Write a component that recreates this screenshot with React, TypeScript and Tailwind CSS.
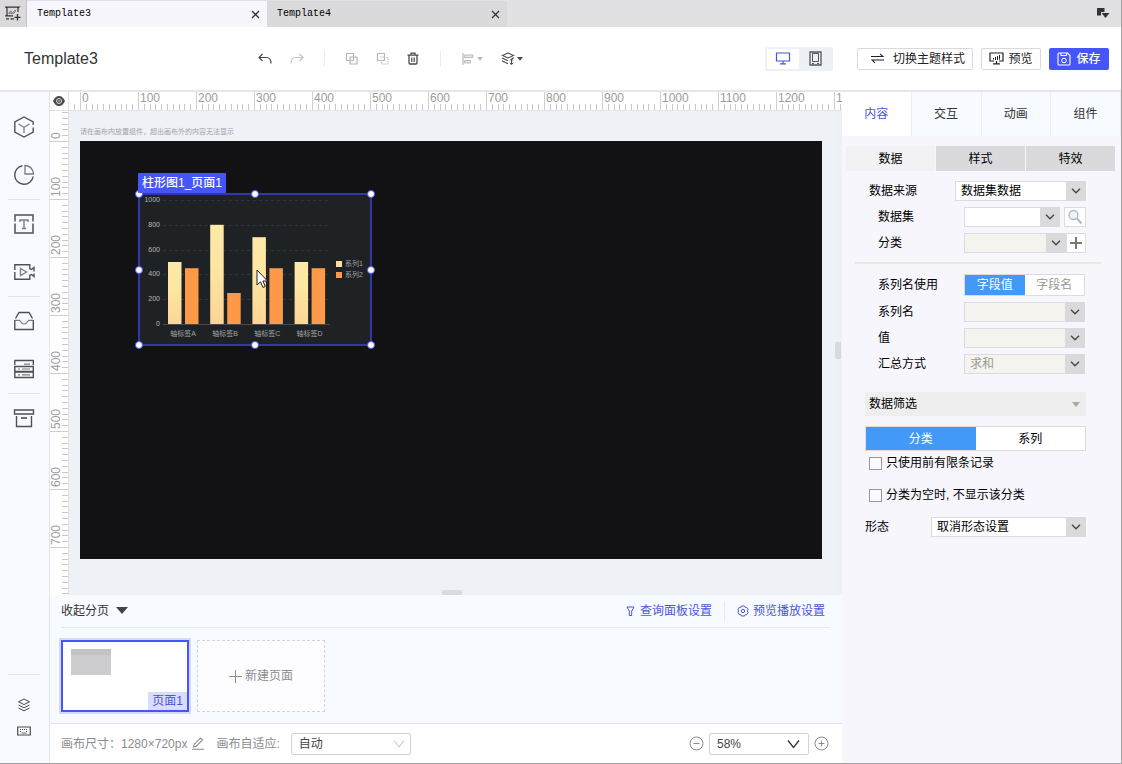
import type { ReactNode } from "react";

const SCALE = 58;

function Svg({ w, h, className = "", children }: { w: number; h: number; className?: string; children: ReactNode }) {
  return (
    <svg
      width={w}
      height={h}
      viewBox={`0 0 ${w} ${h}`}
      fill="none"
      stroke="currentColor"
      aria-hidden="true"
      className={`shrink-0 ${className}`}
    >
      {children}
    </svg>
  );
}

/* ---------- icons ---------- */

const CloseIcon = () => (
  <Svg w={9} h={9}>
    <path d="M1 1l7 7M8 1l-7 7" strokeWidth="1.3" />
  </Svg>
);

const NewBoardIcon = () => (
  <Svg w={16} h={15}>
    <path d="M2 4.500V2L1 1.200h13L13 2v4M2 4.500V9L1 9.800h7" strokeWidth="1.2" />
    <path d="M1 12.800h3M5.500 12.800H9" strokeWidth="1.200" />
    <path d="M3.500 7.500L5.500 5l2 1.500L10.500 4v1.500l-2 2h-5z" strokeWidth="1" stroke="#8a888c" fill="#a5a3a8" />
    <path d="M12.500 8v6.500M9.500 11.300h6" strokeWidth="1.300" />
  </Svg>
);

const WindowMenuIcon = () => (
  <Svg w={13} h={11}>
    <path d="M0 0h7.500v4H4v3.500H0z" fill="currentColor" stroke="none" />
    <path d="M4.500 5h8l-4 5z" fill="currentColor" stroke="none" />
  </Svg>
);

const UndoIcon = () => (
  <Svg w={14} h={12}>
    <path d="M4.500 1L1 4.500 4.500 8M1 4.500h7.500c3 0 4.500 2 4.500 6" strokeWidth="1.2" />
  </Svg>
);

const RedoIcon = () => (
  <Svg w={14} h={12}>
    <path d="M9.500 1L13 4.500 9.500 8M13 4.500H5.500C2.500 4.500 1 6.500 1 10.500" strokeWidth="1.1" />
  </Svg>
);

const GroupIcon = () => (
  <Svg w={13} h={13}>
    <path d="M1.500 1.500h7v7h-7zM5 5h7v7H5z" strokeWidth="1.200" />
  </Svg>
);

const UngroupIcon = () => (
  <Svg w={13} h={13}>
    <path d="M1.500 1.500h7v7h-7z" strokeWidth="1.200" />
    <path d="M5.500 10v2H12V5.500h-2M4 5h4" strokeDasharray="1.500 1" />
  </Svg>
);

const TrashIcon = () => (
  <Svg w={12} h={13}>
    <path d="M.5 3.200h11M4 3V1.200h4V3M2 3.500V11c0 .6.4 1 1 1h6c.6 0 1-.4 1-1V3.500" strokeWidth="1.300" />
    <path d="M4.500 5.500v4.500M7.500 5.500v4.500M6 5.500v4.500" strokeWidth="0.8" />
  </Svg>
);

const AlignIcon = () => (
  <Svg w={12} h={12}>
    <path d="M1 0v12" strokeWidth="1.300" />
    <path d="M2.500 2h8.500v2.500H2.500zM2.500 7.500h6v2.500h-6z" fill="#e6e6e8" />
  </Svg>
);

const LayerMoveIcon = () => (
  <Svg w={14} h={13}>
    <path d="M7 1l5.500 2.500L7 6 1.500 3.500z" strokeWidth="1.100" />
    <path d="M1 6l6 2.800M1 8.800l6 3M13 5.800l-2.200 1" strokeWidth="1.200" />
    <path d="M10.500 7.200v5M8.800 8.500l1.700-1.500 1.700 1.500M8.800 11l1.700 1.500 1.700-1.500" />
  </Svg>
);

const Caret = ({ className = "" }: { className?: string }) => (
  <svg width="6" height="4" viewBox="0 0 6 4" className={className} aria-hidden="true">
    <path d="M0 0h6L3 3.800z" fill="currentColor" />
  </svg>
);

const MonitorIcon = () => (
  <Svg w={16} h={13}>
    <path d="M1.500 1h13v8h-13zM8 9v2.500M5 11.800h6" strokeWidth="1.200" />
  </Svg>
);

const PhoneIcon = () => (
  <Svg w={13} h={15}>
    <path d="M1 1h11v13H1z" strokeWidth="1.300" />
    <path d="M3.500 2.500h6v8h-6zM3 12.500h2M8 12.500h2" />
  </Svg>
);

const SwapIcon = () => (
  <Svg w={13} h={11}>
    <path d="M0 3.500h12L9 .8M13 7H1l3 2.800" strokeWidth="1.100" />
  </Svg>
);

const PreviewIcon = () => (
  <Svg w={15} h={13}>
    <path d="M5 9H1V1h13v8h-4M7.500 9v2.500M4 11.800h7" strokeWidth="1.200" />
    <path d="M4.500 7.500V6M6.500 8V5M8.500 8V4M10.500 7.500V3" />
  </Svg>
);

const SaveIcon = () => (
  <Svg w={14} h={14}>
    <path d="M1 2c0-.6.400-1 1-1h8.500L13 3.500V12c0 .6-.4 1-1 1H2c-.6 0-1-.4-1-1zM4 1v2.500h5.500V1" strokeWidth="1.100" />
    <circle cx="7" cy="8.500" r="2.300" />
  </Svg>
);

const CubeIcon = () => (
  <Svg w={22} h={22}>
    <path d="M20.200 9V6L11 1 1.800 6v10l9.200 5 9.200-5v-4.500" strokeWidth="1.400" />
    <path d="M5.500 8L11 11.200 16.500 8M11 11.200V17" stroke="#7c7c7e" strokeWidth="1.300" />
  </Svg>
);

const PieIcon = () => (
  <Svg w={22} h={22}>
    <path d="M9.500 1.800A9.300 9.300 0 1 0 20.200 12.500" strokeWidth="1.400" />
    <path d="M12 1.500c4.800.4 8 3.700 8.500 8.500H12z" stroke="#7c7c7e" strokeWidth="1.300" />
  </Svg>
);

const TextIcon = () => (
  <Svg w={22} h={20}>
    <path d="M2 7.500V1h18v6.500M2 9.500V19h18V9.500" strokeWidth="1.500" />
    <path d="M7 8V6h8v2M11 6v8.500M9 14.500h4" stroke="#7c7c7e" strokeWidth="1.400" />
  </Svg>
);

const VideoIcon = () => (
  <Svg w={22} h={18}>
    <path d="M1.800 7V1.800h15v4l1.700.7 2.500-2v4M1.800 9v7.200h15v-4l1.700-.7 2.500 2V10.500" strokeWidth="1.400" />
    <path d="M7.500 5.500l6 3.500-6 3.500z" stroke="#7c7c7e" strokeWidth="1.300" />
  </Svg>
);

const TrayIcon = () => (
  <Svg w={22} h={20}>
    <path d="M2.500 7.500L6 1.500h10l3.500 6M1.800 9v9.500h18.500V9" strokeWidth="1.400" />
    <path d="M2 9.300h4.500c.8 0 1.200 3.700 4.600 3.700s3.800-3.700 4.600-3.700H20" stroke="#7c7c7e" strokeWidth="1.200" />
  </Svg>
);

const ServerIcon = () => (
  <Svg w={22} h={20}>
    <path d="M1.800 6V1.500h18.500V6M1.800 7.500h18.500v5H1.800zM1.800 13h18.500v5.500H1.800z" strokeWidth="1.400" />
    <path d="M11 5.200h6M5 10h2M9 10h8M5 15.800h2M9 15.800h8" stroke="#7c7c7e" strokeWidth="1.200" />
  </Svg>
);

const ArchiveIcon = () => (
  <Svg w={22} h={20}>
    <path d="M1.500 2h19v4h-19zM3.500 8v10.500h15V8" strokeWidth="1.400" />
    <path d="M8 10h6" strokeWidth="1.600" />
  </Svg>
);

const LayersIcon = () => (
  <Svg w={14} h={14}>
    <path d="M7 1l5.500 2.800L7 6.600 1.500 3.800zM1.500 7L7 9.800 12.500 7M1.500 10L7 12.800 12.500 10" />
  </Svg>
);

const KeyboardIcon = () => (
  <Svg w={14} h={10}>
    <path d="M.7 1h12.600v8H.7z" strokeWidth="1.200" />
    <path d="M3 3.500h8M3 5.500h2M9 5.500h2" strokeDasharray="1 1" />
    <path d="M4.500 7h5" strokeWidth="0.800" />
  </Svg>
);

const FilterIcon = () => (
  <Svg w={9} h={11}>
    <path d="M1 1h7L5.700 5v4.500H3.300V5z" />
  </Svg>
);

const GearIcon = () => (
  <Svg w={12} h={12}>
    <path d="M4.500 1h3l.7 1.400 1.600.1 1.300 2.300L10.300 6l.8 1.300-1.300 2.300-1.600.1-.7 1.300h-3l-.7-1.300-1.600-.1L.9 7.300 1.700 6 .9 4.800l1.300-2.300 1.600-.1z" />
    <circle cx="6" cy="6" r="1.700" />
  </Svg>
);

const PencilIcon = () => (
  <Svg w={14} h={13}>
    <path d="M2.500 10l.8-2.800L9.500 1l2 2-6.200 6.200zM1 12.300h12" strokeWidth="1.100" />
  </Svg>
);

const EyeIcon = () => (
  <svg width="12" height="10" viewBox="0 0 12 10" aria-hidden="true">
    <path d="M0 5c1.300-3 3.300-5 6-5s4.700 2 6 5c-1.300 3-3.300 5-6 5S1.300 8 0 5z" fill="#4c4c4c" />
    <circle cx="6" cy="5" r="2.500" fill="none" stroke="#d8d8d8" />
    <circle cx="6" cy="5" r="0.800" fill="#d8d8d8" />
  </svg>
);

/* ---------- rulers ---------- */

function TopRuler() {
  const origin = 11;
  return (
    <svg className="block h-[18px] w-full" aria-hidden="true">
      {Array.from({ length: 140 }, (_, n) => n - 1).map((n) => {
        const x = Math.round(origin + (n * SCALE) / 10);
        const major = n % 10 === 0;
        return <rect key={n} x={x} y={major ? 0 : 12} width="1" height={major ? 18 : 6} fill={major ? "#cfcfd2" : "#c9c9cc"} />;
      })}
      {Array.from({ length: 14 }, (_, n) => (
        <text key={n} x={origin + n * SCALE + 2} y="10" className="fill-[#9b9b9b] text-[12px]">
          {n * 100}
        </text>
      ))}
    </svg>
  );
}

function SideRuler() {
  const origin = 30;
  return (
    <svg className="block w-[18px] shrink-0 self-stretch" aria-hidden="true">
      {Array.from({ length: 85 }, (_, n) => n - 5).map((n) => {
        const y = Math.round(origin + (n * SCALE) / 10);
        const major = n % 10 === 0;
        return <rect key={n} x={major ? 0 : 12} y={y} width={major ? 18 : 6} height="1" fill={major ? "#cfcfd2" : "#c9c9cc"} />;
      })}
      {Array.from({ length: 8 }, (_, n) => (
        <text
          key={n}
          transform={`translate(10 ${origin + n * SCALE - 2}) rotate(-90)`}
          className="fill-[#9b9b9b] text-[12px]"
        >
          {n * 100}
        </text>
      ))}
    </svg>
  );
}

/* ---------- chart ---------- */

const rows = [
  { name: "轴标签A", a: 500, b: 450 },
  { name: "轴标签B", a: 800, b: 250 },
  { name: "轴标签C", a: 700, b: 450 },
  { name: "轴标签D", a: 500, b: 450 },
];

function BarChart() {
  const base = 130;
  const unit = 124 / 1000;
  return (
    <svg viewBox="1 0 232 151" className="block h-full w-full" role="img" aria-label="柱形图1">
      <defs>
        <linearGradient id="cream" x1="0" y1="0" x2="0" y2="1">
          <stop offset="0" stopColor="#fee9a6" />
          <stop offset="0.4" stopColor="#fee6a3" />
          <stop offset="1" stopColor="#fdd596" />
        </linearGradient>
      </defs>
      {[0, 200, 400, 600, 800, 1000].map((v) => {
        const y = Math.round(base - v * unit);
        return (
          <g key={v}>
            <path
              d={`M25 ${y + 0.5}H192`}
              stroke={v ? "#343536" : "#4a4a4c"}
              strokeDasharray={v ? "3 3" : undefined}
            />
            <text x="22" y={y + 2} textAnchor="end" className="fill-[#b9b9ba] text-[7px]">
              {v}
            </text>
          </g>
        );
      })}
      {rows.map((r, i) => {
        const x = 30 + i * 42.2;
        return (
          <g key={r.name}>
            <rect x={x} y={base - r.a * unit} width="13.5" height={r.a * unit} fill="url(#cream)" />
            <rect x={x + 17} y={base - r.b * unit} width="13.5" height={r.b * unit} fill="#fd9a48" />
            <text x={x + 15} y="142" textAnchor="middle" className="fill-[#a2a2a4] text-[7px]">
              {r.name}
            </text>
          </g>
        );
      })}
      <rect x="198" y="67" width="6" height="6" fill="#fddf9b" />
      <text x="207" y="72" className="fill-[#a2a2a4] text-[7px]">系列1</text>
      <rect x="198" y="78" width="6" height="6" fill="#fd9a48" />
      <text x="207" y="83" className="fill-[#a2a2a4] text-[7px]">系列2</text>
    </svg>
  );
}

const handles = [
  "left-0 top-0",
  "left-1/2 top-0",
  "left-full top-0",
  "left-0 top-1/2",
  "left-full top-1/2",
  "left-0 top-full",
  "left-1/2 top-full",
  "left-full top-full",
];

/* ---------- form parts ---------- */

function FormSelect({ id, value = "", muted, className = "" }: { id: string; value?: string; muted?: boolean; className?: string }) {
  return (
    <div className={`relative h-5 ${className}`}>
      <select
        id={id}
        disabled={muted}
        className={`h-full w-full appearance-none border border-[#dcdcde] pl-[5px] text-[12px] leading-[18px] opacity-100 outline-none ${
          muted ? "bg-[#f4f3ee] text-[#9a9a9a]" : "bg-white text-black"
        }`}
      >
        <option>{value}</option>
      </select>
      <span className="pointer-events-none absolute inset-y-0 right-0 flex w-5 items-center justify-center bg-[#dadadc] text-[#444]">
        <Svg w={10} h={6}>
          <path d="M1 .8l4 4 4-4" strokeWidth="1.300" />
        </Svg>
      </span>
    </div>
  );
}

function Field({ label, id, children }: { label: string; id: string; children: ReactNode }) {
  return (
    <div className="flex items-center justify-between pl-[9px]">
      <label htmlFor={id}>{label}</label>
      {children}
    </div>
  );
}

const Rule = () => <hr className="w-8 border-[#e3e5ea]" />;

function ToolRow({ label, children }: { label: string; children: ReactNode }) {
  return (
    <button type="button" aria-label={label} className="flex h-12 w-full items-center justify-center text-[#505052]">
      {children}
    </button>
  );
}

/* ---------- page ---------- */

function TabBar() {
  return (
    <div className="flex h-[27px] items-stretch bg-[#e1e0e3] text-[#333]">
      <button type="button" aria-label="新建模板" className="flex w-[27px] items-center justify-center border-r border-[#c4c3c7] bg-[#dcd9dd]">
        <NewBoardIcon />
      </button>
      {["Template3", "Template4"].map((name, i) => (
        <div
          key={name}
          className={`mt-px flex w-[240px] items-center justify-between pl-[10px] pr-[7px] ${i === 0 ? "bg-[#f7f6fc]" : "bg-[#dadadc]"}`}
        >
          <span className="font-['Liberation_Mono',monospace] text-[10px] leading-[14px] text-black">{name}</span>
          <button type="button" aria-label={`关闭 ${name}`}>
            <CloseIcon />
          </button>
        </div>
      ))}
      <button type="button" aria-label="窗口菜单" className="ml-auto mr-[11px] text-[#333]">
        <WindowMenuIcon />
      </button>
    </div>
  );
}

function Header() {
  return (
    <header className="flex h-[65px] items-center border-b-2 border-[#e6e6e8] bg-white pr-3">
      <h1 className="w-[250px] pl-6 text-[16px] leading-[20px] text-[#333]">Template3</h1>
      <div className="flex items-center text-[#4a4a4a]">
        <button type="button" aria-label="撤销" className="ml-2 mr-[9px]"><UndoIcon /></button>
        <button type="button" aria-label="重做" className="ml-[9px] mr-5 text-[#c4c4c6]"><RedoIcon /></button>
        <span className="h-4 w-px bg-[#ececee]" />
        <button type="button" aria-label="组合" className="ml-5 mr-[9px] text-[#b6b6b8]"><GroupIcon /></button>
        <button type="button" aria-label="取消组合" className="ml-[9px] mr-[9px] text-[#b6b6b8]"><UngroupIcon /></button>
        <button type="button" aria-label="删除" className="ml-[9px] mr-[21px]"><TrashIcon /></button>
        <span className="h-4 w-px bg-[#ececee]" />
        <button type="button" aria-label="对齐" className="ml-[21px] mr-[9px] flex items-center gap-[3px] text-[#bcbcbe]">
          <AlignIcon />
          <Caret />
        </button>
        <button type="button" aria-label="层级" className="ml-[9px] flex items-center gap-[2px]">
          <LayerMoveIcon />
          <Caret />
        </button>
      </div>
      <div className="ml-auto flex items-center gap-2 text-[12px] leading-[16px] text-[#222]">
        <div className="mr-4 flex h-6 rounded-[2px] bg-[#edf0f4] p-[2px]">
          <button type="button" aria-label="桌面" className="flex w-8 items-center justify-center bg-white text-[#4756e0]"><MonitorIcon /></button>
          <button type="button" aria-label="手机" className="flex w-8 items-center justify-center text-[#555]"><PhoneIcon /></button>
        </div>
        <button type="button" className="flex h-[22px] w-[116px] items-center justify-center gap-[9px] rounded-[2px] border border-[#d9d9db] pl-[6px]">
          <SwapIcon />
          切换主题样式
        </button>
        <button type="button" className="flex h-[22px] w-[60px] items-center justify-center gap-1 rounded-[2px] border border-[#d9d9db]">
          <PreviewIcon />
          预览
        </button>
        <button type="button" className="flex h-[22px] w-[60px] items-center justify-center gap-[5px] rounded-[2px] bg-[#4655fa] font-medium text-white">
          <SaveIcon />
          保存
        </button>
      </div>
    </header>
  );
}

function SideBar() {
  return (
    <nav className="flex w-[50px] shrink-0 flex-col items-center border-r border-[#e3e4ea] bg-[#f7faff] pt-[11px] pr-px">
      <ToolRow label="组件"><CubeIcon /></ToolRow>
      <ToolRow label="图表"><PieIcon /></ToolRow>
      <Rule />
      <ToolRow label="文本"><TextIcon /></ToolRow>
      <ToolRow label="媒体"><VideoIcon /></ToolRow>
      <Rule />
      <ToolRow label="收件箱"><TrayIcon /></ToolRow>
      <ToolRow label="数据"><ServerIcon /></ToolRow>
      <Rule />
      <ToolRow label="归档"><ArchiveIcon /></ToolRow>
      <div className="mt-auto flex w-full flex-col items-center pb-[19px] text-[#4a4a4a]">
        <Rule />
        <button type="button" aria-label="图层" className="mt-[17px] flex h-[26px] items-center"><LayersIcon /></button>
        <button type="button" aria-label="快捷键" className="flex h-[26px] items-center"><KeyboardIcon /></button>
      </div>
    </nav>
  );
}

function CanvasArea() {
  return (
    <div className="flex flex-1 flex-col">
      <div className="flex h-[19px] border-b border-[#e3e3e8] bg-white">
        <button type="button" aria-label="显示标尺" className="flex w-[19px] shrink-0 items-center justify-center border-r border-[#e3e3e8]">
          <EyeIcon />
        </button>
        <div className="min-w-0 flex-1 overflow-hidden">
          <TopRuler />
        </div>
      </div>
      <div className="flex flex-1">
        <div className="flex border-r border-[#dddde2] bg-white">
          <SideRuler />
        </div>
        <div className="relative min-w-0 flex-1 overflow-hidden bg-[#eef1f5] pl-[11px]">
          <p className="pt-[16px] pb-1 text-[7px] leading-[10px] text-[#a3a3a6]">请在画布内放置组件，超出画布外的内容无法显示</p>
          <div className="relative mb-9 h-[418px] w-[742px] bg-[#121214]">
            <div className="absolute left-[59px] top-[53px] h-[151px] w-[232px] bg-[#1e2225]">
              <BarChart />
              <div className="absolute -inset-px border-2 border-[#3438a6]" />
              {handles.map((pos) => (
                <span
                  key={pos}
                  className={`absolute size-2 -translate-x-1/2 -translate-y-1/2 rounded-full border border-[#4655fa] bg-white ${pos}`}
                />
              ))}
              <span className="absolute -left-px -top-[21px] whitespace-nowrap rounded-[1px] bg-[#4655fa] px-1 text-[12px] font-medium leading-[20px] text-white">
                柱形图1_页面1
              </span>
              <svg width="13" height="20" viewBox="0 0 13 20" className="absolute left-[117px] top-[75px]" aria-hidden="true">
                <path d="M1 1v15l3.500-3.200L7 18.500l2.300-1L6.900 12h4.600z" fill="#fff" stroke="#222" />
              </svg>
            </div>
          </div>
          <span className="absolute bottom-0 left-[373px] h-[5px] w-5 rounded-t-[2px] bg-[#d9dadd]" />
        </div>
        <div className="relative w-1 shrink-0 bg-[#f0eff5]">
          <span className="absolute right-px top-[231px] h-[17px] w-[6px] rounded-l-[2px] bg-[#d9dadd]" />
        </div>
      </div>
    </div>
  );
}

function PagePanel() {
  return (
    <section className="h-[128px] bg-[#f7faff] pl-[11px] pr-3 text-[12px] leading-[16px]">
      <div className="flex h-[33px] items-center border-b border-[#e6e7ea]">
        <button type="button" className="flex items-center gap-[7px] text-[#333]">
          收起分页
          <svg width="12" height="8" viewBox="0 0 12 8" aria-hidden="true">
            <path d="M0 0h12L6 7z" fill="#444" />
          </svg>
        </button>
        <div className="ml-auto flex items-center gap-3 pr-[5px] text-[#4b55d6]">
          <button type="button" className="flex items-center gap-[5px]">
            <FilterIcon />
            查询面板设置
          </button>
          <span className="h-5 w-px bg-[#e6e7ea]" />
          <button type="button" className="flex items-center gap-1">
            <GearIcon />
            预览播放设置
          </button>
        </div>
      </div>
      <div className="flex gap-2 pt-3">
        <button type="button" className="relative h-[72px] w-32 border-2 border-[#4655fa] bg-white outline-2 outline-[#d6daf9]">
          <span className="absolute left-2 top-[7px] h-[26px] w-10 border-t-[6px] border-[#c3c3c5] bg-[#cdcdcf]" />
          <span className="absolute bottom-0 right-0 bg-[#d9dcfa] px-1 leading-[18px] text-[#4b55d6]">页面1</span>
        </button>
        <button type="button" className="flex h-[72px] w-32 items-center justify-center gap-[3px] border border-dashed border-[#d3d4d7] bg-[#fdfdff] text-[#8b8b8e]">
          <Svg w={13} h={13}>
            <path d="M6.500 0v13M0 6.500h13" />
          </Svg>
          新建页面
        </button>
      </div>
    </section>
  );
}

function Footer() {
  return (
    <footer className="flex h-10 items-center border-t border-[#e3e4e8] bg-white pl-[11px] pr-[13px] text-[12px] leading-[16px] text-[#8b8b8e]">
      <span>画布尺寸：</span>
      <span>1280×720px</span>
      <button type="button" aria-label="编辑尺寸" className="ml-1"><PencilIcon /></button>
      <label htmlFor="fit" className="ml-[11px]">画布自适应:</label>
      <div className="relative ml-[11px] h-[22px] w-[120px]">
        <select id="fit" className="h-full w-full appearance-none rounded-[2px] border border-[#d3d3d6] bg-white pl-[7px] text-[#444] outline-none">
          <option>自动</option>
        </select>
        <Svg w={12} h={8} className="pointer-events-none absolute right-[6px] top-[7px] text-[#bcbcbe]">
          <path d="M1 .5l5 6.500 5-6.500" />
        </Svg>
      </div>
      <div className="ml-auto flex items-center gap-[5px]">
        <button type="button" aria-label="缩小">
          <Svg w={15} h={15}>
            <circle cx="7.500" cy="7.500" r="6.500" />
            <path d="M4.500 7.500h6" />
          </Svg>
        </button>
        <div className="relative h-[22px] w-[100px]">
          <select aria-label="缩放" className="h-full w-full appearance-none rounded-[2px] border border-[#d3d3d6] bg-white pl-[7px] text-[#444] outline-none">
            <option>58%</option>
          </select>
          <Svg w={13} h={9} className="pointer-events-none absolute right-[9px] top-[7px] text-[#333]">
            <path d="M1 .5l5.500 7 5.500-7" strokeWidth="1.300" />
          </Svg>
        </div>
        <button type="button" aria-label="放大">
          <Svg w={15} h={15}>
            <circle cx="7.500" cy="7.500" r="6.500" />
            <path d="M4.500 7.500h6M7.500 4.500v6" />
          </Svg>
        </button>
      </div>
    </footer>
  );
}

function Inspector() {
  return (
    <aside className="w-[279px] shrink-0 bg-[#f7f6fc] text-[12px] leading-[16px] text-black">
      <div className="grid h-11 grid-cols-4">
        {["内容", "交互", "动画", "组件"].map((t, i) => (
          <button
            key={t}
            type="button"
            className={`border-r border-[#eceef2] ${i === 0 ? "bg-white text-[#4b55d6]" : "bg-[#f7faff] text-[#333]"}`}
          >
            {t}
          </button>
        ))}
      </div>
      <div className="grid h-[35px] grid-cols-3 gap-px pl-1 pr-[6px] pt-[10px]">
        {["数据", "样式", "特效"].map((t, i) => (
          <button key={t} type="button" className={i === 0 ? "bg-[#f2f2f4]" : "bg-[#dadadc]"}>
            {t}
          </button>
        ))}
      </div>
      <form>
        <div className="flex flex-col gap-[6px] pl-[27px] pr-[35px] pt-[10px]">
          <div className="flex items-center justify-between">
            <label htmlFor="source">数据来源</label>
            <FormSelect id="source" value="数据集数据" className="w-[131px]" />
          </div>
          <Field label="数据集" id="dataset">
            <div className="flex w-[122px] gap-1">
              <FormSelect id="dataset" className="flex-1" />
              <button type="button" aria-label="查找数据集" className="flex h-5 w-[22px] items-center justify-center border border-[#dcdcde] bg-white text-[#b4b8c4]">
                <Svg w={16} h={16}>
                  <circle cx="6.500" cy="6" r="4.500" fill="#eef2fa" strokeWidth="1.300" />
                  <path d="M10 9.500l4.500 5" strokeWidth="2" />
                </Svg>
              </button>
            </div>
          </Field>
          <Field label="分类" id="category">
            <div className="flex w-[122px]">
              <FormSelect id="category" muted className="flex-1" />
              <button type="button" aria-label="添加分类" className="flex h-5 w-5 items-center justify-center border border-[#dcdcde] bg-white text-[#777]">
                <Svg w={12} h={12}>
                  <path d="M6 0v12M0 6h12" strokeWidth="2" />
                </Svg>
              </button>
            </div>
          </Field>
        </div>
        <hr className="ml-[13px] mr-5 mt-[9px] border-t-2 border-[#eae9dd]" />
        <div className="flex flex-col gap-[6px] pl-[27px] pr-[36px] pt-[10px]">
          <Field label="系列名使用" id="byValue">
            <div className="grid h-[22px] w-[121px] grid-cols-2 border border-[#dcdcde] bg-white">
              <button id="byValue" type="button" className="bg-[#4399f8] text-white">字段值</button>
              <button type="button" className="text-[#999]">字段名</button>
            </div>
          </Field>
          <Field label="系列名" id="series"><FormSelect id="series" muted className="w-[121px]" /></Field>
          <Field label="值" id="value"><FormSelect id="value" muted className="w-[121px]" /></Field>
          <Field label="汇总方式" id="summary"><FormSelect id="summary" value="求和" muted className="w-[121px]" /></Field>
        </div>
        <div className="pl-[23px] pr-[35px] pt-[18px]">
          <button type="button" className="flex h-6 w-full items-center justify-between bg-[#eeeeef] pl-1 pr-[6px]">
            数据筛选
            <svg width="8" height="5" viewBox="0 0 8 5" aria-hidden="true">
              <path d="M0 0h8L4 5z" fill="#aaa" />
            </svg>
          </button>
          <div className="mt-[10px] grid h-[25px] grid-cols-2 border border-[#dcdcde] bg-white">
            <button type="button" className="bg-[#4399f8] text-white">分类</button>
            <button type="button">系列</button>
          </div>
          <label className="mt-1 flex items-center gap-1 pl-1">
            <input type="checkbox" className="size-[13px] appearance-none border border-[#999] bg-[#fbfbfd]" />
            只使用前有限条记录
          </label>
          <label className="mt-4 flex items-center gap-1 pl-1">
            <input type="checkbox" className="size-[13px] appearance-none border border-[#999] bg-[#fbfbfd]" />
            分类为空时, 不显示该分类
          </label>
          <div className="mt-[14px] flex items-center justify-between">
            <label htmlFor="form">形态</label>
            <FormSelect id="form" value="取消形态设置" className="w-[155px]" />
          </div>
        </div>
      </form>
    </aside>
  );
}

export default function App() {
  return (
    <div className="flex min-h-screen flex-col border-b border-r border-[#a3a3a6] bg-white font-['Liberation_Sans','Noto_Sans_CJK_SC',sans-serif]">
      <TabBar />
      <Header />
      <div className="flex flex-1">
        <SideBar />
        <main className="flex min-w-0 flex-1 flex-col">
          <CanvasArea />
          <PagePanel />
          <Footer />
        </main>
        <Inspector />
      </div>
    </div>
  );
}
